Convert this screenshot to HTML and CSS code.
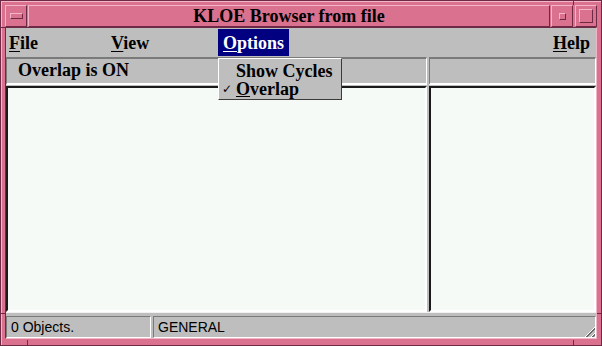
FILE: index.html
```html
<!DOCTYPE html>
<html lang="en">
<head>
    <meta charset="UTF-8">
    <title>KLOE Browser from file</title>
    <link rel="stylesheet" href="styles.css">
</head>
<body>
    <div class="window">
        <div class="titlebar">
            <div class="tbtn menu-btn"><span class="bar"></span></div>
            <div class="title">KLOE Browser from file</div>
            <div class="tbtn min-btn"><span class="min"></span></div>
            <div class="tbtn max-btn"><span class="max"></span></div>
        </div>
        <div class="client">
            <div class="menubar">
                <span class="menu file"><u>F</u>ile</span>
                <span class="menu view"><u>V</u>iew</span>
                <span class="menu options active"><u>O</u>ptions</span>
                <span class="menu help"><u>H</u>elp</span>
            </div>
            <div class="infobar">
                <div class="info info-left">Overlap is ON</div>
                <div class="info info-right"></div>
            </div>
            <div class="panes">
                <div class="pane pane-left"></div>
                <div class="pane pane-right"></div>
            </div>
            <div class="statusbar">
                <div class="cell cell-count">0 Objects.</div>
                <div class="cell cell-mode">GENERAL</div>
                <div class="grip"></div>
            </div>
        </div>

        <div class="dropdown">
            <div class="item"><span class="check"></span>Show Cycles</div>
            <div class="item"><span class="check">&#10003;</span><u>O</u>verlap</div>
        </div>

        <!-- resize handle notches on the frame -->
        <span class="notch notch-lt"></span>
        <span class="notch notch-lb"></span>
        <span class="notch notch-tr"></span>
        <span class="notch notch-rb"></span>
        <span class="notch notch-bl"></span>
        <span class="notch notch-br"></span>
    </div>
</body>
</html>
```

FILE: styles.css
```css
* {
    margin: 0;
    padding: 0;
    box-sizing: border-box;
}
body {
    background: #ffffff;
    font-family: 'Liberation Serif', serif;
}
.window {
    position: relative;
    width: 602px;
    height: 346px;
    background: #d9718f;
    border: 1px solid #6e2a44;
    box-shadow: inset 1px 1px 0 #f2b6c8;
    padding: 4px 4px 6px 4px;
    display: flex;
    flex-direction: column;
}

/* title bar */
.titlebar {
    display: flex;
    height: 22px;
}
.tbtn {
    width: 22px;
    height: 22px;
    border: 1px solid;
    border-color: #f2b6c8 #6e2a44 #6e2a44 #f2b6c8;
    display: flex;
    align-items: center;
    justify-content: center;
}
.menu-btn {
    margin-right: 1px;
}
.bar {
    width: 13px;
    height: 6px;
    border: 1px solid;
    border-color: #f2b6c8 #6e2a44 #6e2a44 #f2b6c8;
}
.min-btn {
    margin-left: 1px;
    margin-right: 2px;
}
.min {
    width: 7px;
    height: 7px;
    border: 1px solid;
    border-color: #f2b6c8 #6e2a44 #6e2a44 #f2b6c8;
}
.max {
    width: 14px;
    height: 14px;
    border: 1px solid;
    border-color: #f2b6c8 #6e2a44 #6e2a44 #f2b6c8;
}
.title {
    flex: 1;
    border: 1px solid;
    border-color: #f2b6c8 #6e2a44 #6e2a44 #f2b6c8;
    text-align: center;
    font-weight: bold;
    font-size: 18px;
    line-height: 20px;
    color: #000000;
}

/* client area */
.client {
    flex: 1;
    background: #bebebe;
    border: 1px solid;
    border-color: #6e2a44 #f2b6c8 #f2b6c8 #6e2a44;
    display: flex;
    flex-direction: column;
}
.menubar {
    display: flex;
    height: 29px;
    padding-top: 1px;
    font-weight: bold;
    font-size: 18px;
}
.menu {
    height: 27px;
    line-height: 28px;
    padding: 0 5px;
}
.menu u {
    text-underline-offset: 2px;
}
.file {
    width: 100px;
    padding-left: 3px;
}
.view {
    width: 112px;
}
.active {
    background: #000080;
    color: #ffffff;
}
.help {
    margin-left: auto;
    padding-right: 6px;
}

.infobar {
    display: flex;
    height: 28px;
    gap: 2px;
}
.info {
    border: 1px solid;
    border-color: #7a7a7a #ffffff #ffffff #7a7a7a;
    border-width: 2px 1px 2px 1px;
    font-weight: bold;
    font-size: 18px;
    line-height: 22px;
    padding-left: 11px;
}
.info-left {
    width: 421px;
}
.info-right {
    flex: 1;
}

.panes {
    display: flex;
    height: 228px;
    gap: 2px;
    padding-top: 1px;
    border-bottom: 1px solid #f2f2f2;
}
.pane {
    background: #f6faf6;
    border: 2px solid;
    border-color: #1a1a1a #ffffff #ffffff #1a1a1a;
}
.pane-left {
    width: 421px;
}
.pane-right {
    flex: 1;
}

.statusbar {
    position: relative;
    display: flex;
    margin-top: 3px;
    flex: 1;
    gap: 2px;
    font-family: 'Liberation Sans', sans-serif;
    font-size: 14px;
}
.cell {
    border: 1px solid;
    border-color: #7a7a7a #ffffff #ffffff #7a7a7a;
    line-height: 20px;
    padding-left: 4px;
}
.cell-count {
    width: 145px;
}
.cell-mode {
    flex: 1;
}
.grip {
    position: absolute;
    right: 1px;
    bottom: 1px;
    width: 12px;
    height: 12px;
    background: repeating-linear-gradient(135deg, #bebebe 0 1.5px, #ffffff 1.5px 2.5px, #6a6a6a 2.5px 4px);
    clip-path: polygon(100% 0, 100% 100%, 0 100%);
}

/* drop-down menu */
.dropdown {
    position: absolute;
    left: 217px;
    top: 57px;
    width: 124px;
    height: 42px;
    background: #bebebe;
    border: 1px solid;
    border-color: #ffffff #3a3a3a #3a3a3a #ffffff;
    font-weight: bold;
    font-size: 18px;
    padding-top: 4px;
}
.item {
    display: flex;
    height: 18px;
    line-height: 17px;
}
.check {
    width: 17px;
    font-size: 12px;
    text-align: right;
    padding-right: 4px;
    font-family: 'DejaVu Sans', sans-serif;
}

/* frame notches */
.notch {
    position: absolute;
    background: #6e2a44;
}
.notch-lt { left: 0; top: 26px; width: 4px; height: 1px; }
.notch-lb { left: 0; top: 312px; width: 4px; height: 1px; }
.notch-tr { left: 572px; top: 0; width: 1px; height: 4px; }
.notch-rb { right: 0; top: 312px; width: 4px; height: 1px; }
.notch-bl { left: 26px; bottom: 0; width: 1px; height: 5px; }
.notch-br { left: 572px; bottom: 0; width: 1px; height: 5px; }
```
